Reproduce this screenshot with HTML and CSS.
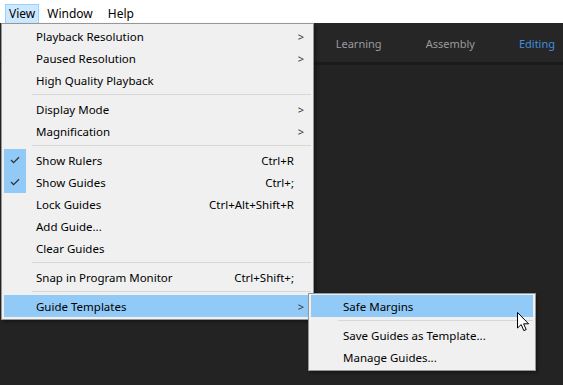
FILE: index.html
```html
<!DOCTYPE html>
<html lang="en">
<head>
  <meta charset="UTF-8" />
  <title>View menu</title>
  <link rel="stylesheet" href="styles.css">
</head>
<body>
  <div class="menubar">
    <span class="menubar-item active">View</span>
    <span class="menubar-item">Window</span>
    <span class="menubar-item">Help</span>
  </div>

  <div class="workspace">
    <div class="workspace-header">
      <span class="tab">Learning</span>
      <span class="tab">Assembly</span>
      <span class="tab current">Editing</span>
    </div>
  </div>

  <!-- View dropdown -->
  <div class="menu main-menu">
    <div class="item"><span class="check"></span><span class="label">Playback Resolution</span><span class="key"></span><span class="arrow">&gt;</span></div>
    <div class="item"><span class="check"></span><span class="label">Paused Resolution</span><span class="key"></span><span class="arrow">&gt;</span></div>
    <div class="item"><span class="check"></span><span class="label">High Quality Playback</span><span class="key"></span><span class="arrow"></span></div>
    <div class="sep"></div>
    <div class="item"><span class="check"></span><span class="label">Display Mode</span><span class="key"></span><span class="arrow">&gt;</span></div>
    <div class="item"><span class="check"></span><span class="label">Magnification</span><span class="key"></span><span class="arrow">&gt;</span></div>
    <div class="sep"></div>
    <div class="item"><span class="check on"><svg width="10" height="8" viewBox="0 0 10 8"><path d="M1 4 L3.6 6.6 L9 1.2" fill="none" stroke="#333" stroke-width="1.3"/></svg></span><span class="label">Show Rulers</span><span class="key">Ctrl+R</span><span class="arrow"></span></div>
    <div class="item"><span class="check on"><svg width="10" height="8" viewBox="0 0 10 8"><path d="M1 4 L3.6 6.6 L9 1.2" fill="none" stroke="#333" stroke-width="1.3"/></svg></span><span class="label">Show Guides</span><span class="key">Ctrl+;</span><span class="arrow"></span></div>
    <div class="item"><span class="check"></span><span class="label">Lock Guides</span><span class="key">Ctrl+Alt+Shift+R</span><span class="arrow"></span></div>
    <div class="item"><span class="check"></span><span class="label">Add Guide...</span><span class="key"></span><span class="arrow"></span></div>
    <div class="item"><span class="check"></span><span class="label">Clear Guides</span><span class="key"></span><span class="arrow"></span></div>
    <div class="sep"></div>
    <div class="item"><span class="check"></span><span class="label">Snap in Program Monitor</span><span class="key">Ctrl+Shift+;</span><span class="arrow"></span></div>
    <div class="sep"></div>
    <div class="item hover"><span class="check"></span><span class="label">Guide Templates</span><span class="key"></span><span class="arrow">&gt;</span></div>
  </div>

  <!-- Guide Templates submenu -->
  <div class="menu sub-menu">
    <div class="item hover"><span class="check"></span><span class="label">Safe Margins</span></div>
    <div class="sep"></div>
    <div class="item"><span class="check"></span><span class="label">Save Guides as Template...</span></div>
    <div class="item"><span class="check"></span><span class="label">Manage Guides...</span></div>
  </div>

  <svg class="cursor" width="13" height="20" viewBox="0 0 13 20">
    <path d="M0.5 0.5 L0.5 16 L4.2 12.6 L6.8 18.6 L9.2 17.6 L6.6 11.8 L11.6 11.8 Z" fill="#fff" stroke="#000" stroke-width="1"/>
  </svg>
</body>
</html>
```

FILE: styles.css
```css
html, body {
  margin: 0;
  height: 100%;
}
body {
  font-family: "Noto Sans", "Open Sans", sans-serif;
  font-size: 11.5px;
  color: #000;
  background-color: #232323;
  position: relative;
  overflow: hidden;
  display: flex;
  flex-direction: column;
}
.menubar {
  height: 23px;
  flex-shrink: 0;
  background: #fff;
  display: flex;
  align-items: flex-end;
  padding-left: 5px;
  font-size: 12px;
}
.menubar-item {
  height: 19px;
  line-height: 18px;
  padding: 0 6px 0 7px;
  border: 1px solid transparent;
  border-bottom: none;
  box-sizing: border-box;
}
.menubar-item.active {
  background: #cce8ff;
  border-color: #99d1ff;
  padding: 0 3px;
}
.workspace {
  flex: 1;
}
.workspace-header {
  height: 42px;
  background: #262626;
  border-bottom: 3px solid #1b1b1b;
  display: flex;
  align-items: center;
  justify-content: flex-end;
  padding: 1px 8px 0 0;
  box-sizing: border-box;
  font-size: 11px;
}
.tab {
  color: #9b9b9b;
  margin-left: 44px;
}
.tab.current {
  color: #3f8fdf;
}

/* menus */
.menu {
  position: absolute;
  box-sizing: border-box;
  background: #f0f0f0;
  border: 1px solid #979797;
  box-shadow: 2px 2px 3px rgba(0,0,0,0.35);
}
.main-menu {
  left: 1px;
  top: 23px;
  width: 313px;
  padding: 1px 5px 2px 2px;
}
.sub-menu {
  left: 308px;
  top: 293px;
  width: 228px;
  padding: 1px 2px 2px 2px;
}
.item {
  height: 22px;
  display: grid;
  grid-template-columns: 22px 1fr auto 14px;
  align-items: center;
}
.sub-menu .item {
  grid-template-columns: 22px 1fr;
}
.item.hover {
  background: #91c9f7;
}
.check {
  height: 22px;
  display: flex;
  align-items: center;
  justify-content: center;
}
.check.on {
  background: #91c9f7;
}
.label {
  padding-left: 10px;
  white-space: nowrap;
}
.key {
  text-align: right;
  white-space: nowrap;
}
.arrow {
  text-align: center;
  font-size: 11px;
  color: #333;
}
.sep {
  height: 1px;
  background: #d7d7d7;
  margin: 3px -3px 3px 28px;
}
.sub-menu .sep {
  margin: 3px 0 3px 27px;
}
.cursor {
  position: absolute;
  left: 517px;
  top: 312px;
}
```
